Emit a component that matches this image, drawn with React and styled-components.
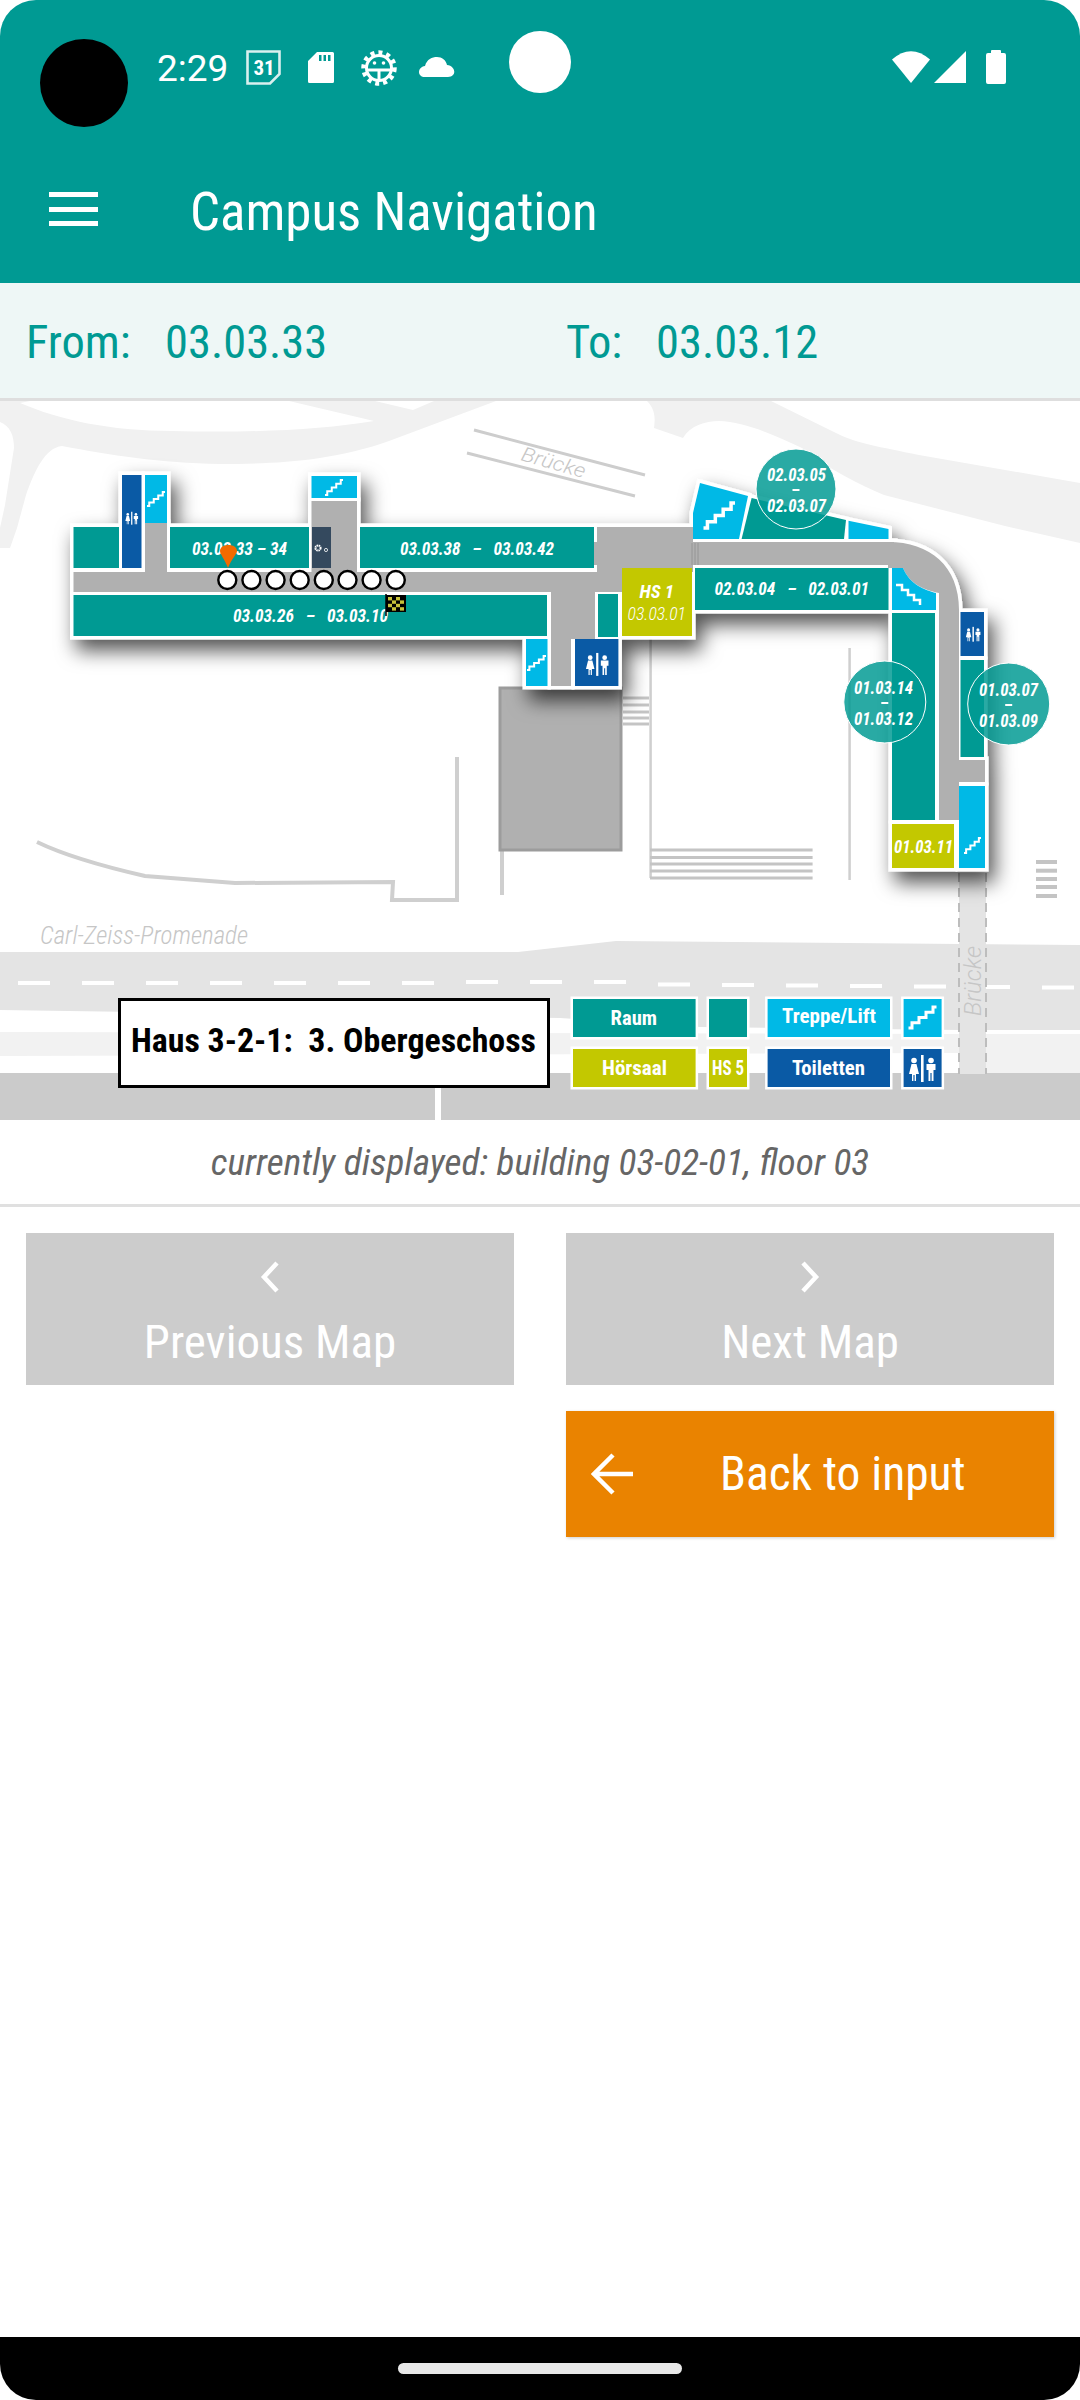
import React from "react"
import styled, { createGlobalStyle } from "styled-components"

const teal = "#009A93"
const lime = "#C3C800"
const cyan = "#00B9E6"
const navy = "#0A5AA5"
const corridor = "#B0B0B0"

const GlobalStyle = createGlobalStyle`
  html, body {
    margin: 0;
    padding: 0;
    background: #fff;
  }
  body {
    font-family: Roboto, "Liberation Sans", sans-serif;
  }
`

const Screen = styled.div`
  width: 1080px;
  height: 2400px;
  display: flex;
  flex-direction: column;
  overflow: hidden;
  position: relative;
  border-radius: 36px;
  background: #fff;
`

const Camera = styled.div`
  position: absolute;
  left: 40px;
  top: 39px;
  width: 88px;
  height: 88px;
  border-radius: 50%;
  background: #000;
`

const Dot = styled.div`
  position: absolute;
  left: 509px;
  top: 31px;
  width: 62px;
  height: 62px;
  border-radius: 50%;
  background: #fff;
`

const AppBar = styled.header`
  background: ${teal};
  color: #fff;
  height: 283px;
  flex: none;
`

const StatusBar = styled.div`
  height: 141px;
  padding: 50px 74px 0 157px;
  box-sizing: border-box;
  display: flex;
  align-items: flex-start;
`

const Clock = styled.span`
  font-size: 37px;
  line-height: 36px;
  font-weight: 400;
  width: 70px;
  margin-top: 1px;
`

const StatusIcon = styled.svg`
  display: block;
  flex: none;
  margin-left: ${({ $gap }) => $gap}px;
  margin-top: ${({ $top }) => $top || 0}px;
`

const CalendarDay = styled.text`
  font-family: Roboto, sans-serif;
  font-size: 21px;
  font-weight: 700;
  font-stretch: 75%;
  fill: #fff;
`

const RightIcons = styled.div`
  margin-left: auto;
  display: flex;
  align-items: flex-start;
`

const Toolbar = styled.div`
  height: 142px;
  display: flex;
  align-items: center;
  padding-left: 49px;
`

const Burger = styled.div`
  width: 49px;
  height: 34px;
  margin-top: -6px;
  display: flex;
  flex-direction: column;
  justify-content: space-between;
  span {
    height: 5px;
    background: #fff;
  }
`

const Title = styled.h1`
  margin: 0 0 0 92px;
  font-size: 53px;
  font-weight: 400;
  font-stretch: 75%;
  white-space: nowrap;
`

const RouteBar = styled.div`
  padding: 3px 0 0 26px;
  height: 112px;
  flex: none;
  background: #eef7f6;
  border-bottom: 3px solid #dedede;
  color: ${teal};
  display: grid;
  grid-template-columns: 540px 1fr;
  align-items: center;
  font-size: 46.5px;
  font-stretch: 75%;
`

const RouteItem = styled.div`
  display: flex;
  white-space: nowrap;
`

const RouteLabel = styled.span`
  width: ${({ $w }) => $w}px;
`

const MapArea = styled.svg`
  display: block;
  flex: none;
  width: 1080px;
  height: 719px;
`

const Caption = styled.div`
  height: 87px;
  box-sizing: border-box;
  flex: none;
  border-bottom: 3px solid #e0e0e0;
  display: flex;
  align-items: center;
  justify-content: center;
  font-size: 37.3px;
  font-style: italic;
  font-stretch: 75%;
  color: #666;
`

const Buttons = styled.div`
  display: grid;
  grid-template-columns: 488px 488px;
  column-gap: 52px;
  row-gap: 26px;
  padding: 26px 26px 0;
`

const MapButton = styled.button`
  height: 152px;
  border: 0;
  padding: 28px 0 0;
  background: #cccccc;
  color: #fff;
  font-family: inherit;
  font-size: 47px;
  font-stretch: 75%;
  display: flex;
  flex-direction: column;
  align-items: center;
  gap: 21px;
`

const BackButton = styled.button`
  grid-column: 2;
  height: 126px;
  border: 0;
  padding: 0 0 0 25px;
  background: #ea8300;
  color: #fff;
  font-family: inherit;
  font-size: 47.5px;
  font-stretch: 75%;
  display: flex;
  align-items: center;
  box-shadow: 1px 1px 3px rgba(0, 0, 0, 0.2);
`

const BackLabel = styled.span`
  margin-left: 87px;
`

const NavBar = styled.div`
  margin-top: auto;
  height: 63px;
  flex: none;
  background: #000;
  display: flex;
  align-items: center;
  justify-content: center;
`

const HomePill = styled.div`
  width: 284px;
  height: 11px;
  border-radius: 6px;
  background: #e8e8e8;
`

/* map text kinds */
const RoomText = styled.text`
  font-family: Roboto, sans-serif;
  font-size: ${({ $size }) => $size || 18}px;
  font-style: italic;
  font-stretch: 75%;
  font-weight: ${({ $light }) => ($light ? 300 : 700)};
  white-space: pre;
  fill: #fff;
`

const LegendText = styled.text`
  font-family: Roboto, sans-serif;
  font-size: 21px;
  font-weight: 700;
  font-stretch: 75%;
  fill: #fff;
`

const GroundText = styled.text`
  font-family: Roboto, sans-serif;
  font-size: ${({ $size }) => $size}px;
  font-style: italic;
  font-weight: 300;
  fill: #c6c6c6;
`

const StreetText = styled(GroundText)`
  font-stretch: 75%;
`

const BoardText = styled.text`
  font-family: Roboto, sans-serif;
  font-size: 33px;
  font-weight: 700;
  font-stretch: 75%;
  white-space: pre;
  fill: #000;
`

const parts = [
  [73.5, 572, 550, 20, corridor],
  [145, 523, 22, 49, corridor],
  [311.5, 501, 45.5, 71, corridor],
  [551, 590, 44, 49, corridor],
  [551, 639, 20, 47, corridor],
  [597, 527, 96, 45, corridor],
  [594, 542, 300, 23, corridor],
  [73.5, 527, 45.5, 41, teal],
  [122, 475, 19.5, 93, navy],
  [145, 475, 22, 48, cyan],
  [170, 527, 139, 41, teal],
  [312, 527, 19, 41, "#34495e"],
  [311.5, 476, 45.5, 22, cyan],
  [360, 527, 234, 41, teal],
  [73.5, 595, 473.5, 41, teal],
  [598, 594, 20, 43, teal],
  [526, 639, 21.5, 47, cyan],
  [575, 639, 43.4, 47, navy],
  [622, 568, 70, 68, lime],
  [695, 568, 193.5, 42, teal],
  [892, 613, 43, 207, teal],
  [892, 824, 62, 44, lime],
  [960.5, 612, 23.5, 44, navy],
  [960.5, 660, 23.5, 97, teal],
  [959, 786, 26, 82, cyan],
  [939, 760, 46, 22, corridor],
]

const corridorCurve = "M888 542 C930 542 959 566 959 610 V820 H939 V593 C925 590 910 585 903 568 H888 Z"
const stairCurve = "M892 568 H903 C910 585 925 590 936 593 V610 H892 Z"
const stairTop = "M700 483 L748 496 L739 539 H693 V513 Z"
const roomTop = "M751.6 498 L846 520 L844 539 H741.6 Z"
const stairSmall = "M848.5 520.7 L888.5 529 V539 H848.5 Z"

const legend = [
  [573, 999, 122.6, teal],
  [709, 999, 38, teal],
  [767.6, 999, 122.4, cyan],
  [903.6, 999, 38, cyan],
  [573, 1049, 122.6, lime],
  [709, 1049, 38, lime],
  [767.6, 1049, 122.4, navy],
  [903.6, 1049, 38, navy],
]

const roomLabels = [
  ["03.03.33 – 34", 192, 555, 95],
  ["03.03.38   –   03.03.42", 400, 555, 154],
  ["03.03.26   –   03.03.10", 233, 622, 155],
  ["02.03.04   –   02.03.01", 714.6, 595, 154.4],
  ["01.03.11", 894, 852.7, 59],
]

const bubbles = [
  [796, 489, 40, "02.03.05", "02.03.07", 767, 481, 490, 512],
  [884.8, 702, 41, "01.03.14", "01.03.12", 854, 694, 703, 725],
  [1008.7, 704, 41, "01.03.07", "01.03.09", 979, 696, 705, 727],
]

const trail = [227.3, 251.4, 275.6, 299.7, 323.8, 347.5, 371.6, 395.8]

const stripes = (x1, x2, ys, w) =>
  ys.map((y) => <line key={y} x1={x1} x2={x2} y1={y} y2={y} stroke="#c4c4c4" strokeWidth={w} />)

const Stairs = ({ x, y, w, h, sw = 2, flip }) => {
  const steps = 4
  const dx = w / steps
  const dy = h / steps
  let d = flip ? `M${x} ${y}` : `M${x} ${y + h}`
  for (let i = 0; i < steps; i++) {
    const px = x + dx * (i + 1)
    const py = flip ? y + dy * (i + 1) : y + h - dy * (i + 1)
    d += flip ? ` H${px} V${py}` : ` H${x + dx * i + dx * 0.5} V${py} H${px}`
  }
  return <path d={d} fill="none" stroke="#fff" strokeWidth={sw} />
}

const Toilets = ({ cx, cy, s = 1 }) => (
  <g transform={`translate(${cx} ${cy}) scale(${s})`} fill="#fff">
    <rect x={-1} y={-13} width={2.6} height={27} />
    <circle cx={-8} cy={-7.5} r={2.8} />
    <path d="M-10.5 -4 H-5.5 L-3 6 H-6 V13 H-7.4 V7 H-8.6 V13 H-10 V6 H-13 Z" />
    <circle cx={9} cy={-7.5} r={2.8} />
    <path d="M4.5 -4 H13.5 V2 H11.5 V13 H9.6 V5 H8.4 V13 H6.5 V2 H4.5 Z" />
  </g>
)

const Flag = () => (
  <g>
    <line x1={386} x2={386} y1={594} y2={616} stroke="#000" strokeWidth={1.5} />
    <rect x={386} y={595} width={20} height={17} fill="#000" />
    {[0, 1, 2, 3].map((r) =>
      [0, 1, 2, 3].map((c) =>
        (r + c) % 2 === 0 ? <rect key={`${r}${c}`} x={388 + c * 4} y={597 + r * 3.4} width={4} height={3.4} fill="#c8c23a" /> : null
      )
    )}
  </g>
)

const dashes = []
for (let x = 18; x < 1080; x += 64) {
  const y = x < 500 ? 983 - (x > 400 ? (x - 400) * 0.015 : 0) : x < 600 ? 982 : 984 + (x - 600) * 0.008
  dashes.push(<rect key={x} x={x} y={y - 2} width={32} height={4} fill="#fff" />)
}

const CampusMap = () => (
  <MapArea viewBox="0 401 1080 719">
    <defs>
      <filter id="shadow" x="-10%" y="-10%" width="125%" height="130%">
        <feDropShadow dx="6" dy="11" stdDeviation="10" floodColor="#000" floodOpacity="0.68" />
      </filter>
    </defs>

    {/* roads */}
    <path
      d="M0 401 H496 L389 441 C330 462 270 464 220 464 C160 463 110 455 62 446 C45 448 35 470 26 495 L17 528 L10 548 H0 V528 L5 505 L14 448 C14 435 10 426 0 422 Z"
      fill="#f1f1f1"
    />
    <path d="M20 403 C60 420 110 431 172 431 C250 433 320 430 374 421 L289 401 H30 Z" fill="#fff" />
    <path d="M375 401 L413 410 L434 401 Z" fill="#fff" />
    <path
      d="M647 401 C656 410 655 420 654 428 L683 438 C690 426 705 421 719 421 C745 422 775 435 802 448 C830 470 860 485 884 495 L1005 526 L1080 543 V483 L919 455 C880 447 855 443 836 433 L771 401 Z"
      fill="#f1f1f1"
    />
    <path d="M0 952 H518 L616 941 L1080 945 V1030 L960 1030 L700 1027 L560 1018 L0 1010 Z" fill="#e4e4e4" />
    <path d="M0 1032 L960 1034 L1080 1034 V1075 H960 V1053 L0 1056 Z" fill="#f2f2f2" />
    <rect x={0} y={1073} width={1080} height={47} fill="#cbcbcb" />
    <rect x={435} y={1086} width={6} height={34} fill="#fff" />
    {dashes}

    {/* bridge */}
    <rect x={959} y={873} width={27} height={201} fill="#e4e4e4" />
    <path d="M959 873 V1074 M986 873 V1074" stroke="#bdbdbd" strokeWidth={2} strokeDasharray="9 6" />
    <GroundText
      $size={24}
      transform="translate(981 1016) rotate(-90)"
      textLength={70}
      lengthAdjust="spacingAndGlyphs"
    >
      Brücke
    </GroundText>

    {/* thin lines round the building */}
    <path d="M474 430 L645 475 M467 453 L635 496" stroke="#cdcdcd" strokeWidth={3} fill="none" />
    <GroundText $size={20} transform="translate(520 460) rotate(16)" textLength={66} lengthAdjust="spacingAndGlyphs">
      Brücke
    </GroundText>
    <path d="M37 842 C70 858 110 868 145 876 L235 883 L393 882 L392 900 H457 V757" stroke="#cfcfcf" strokeWidth={4} fill="none" />
    <path d="M502 851 V895" stroke="#cfcfcf" strokeWidth={4} />
    <path d="M650.6 636 V878 M849.6 648 V880" stroke="#cfcfcf" strokeWidth={2.5} />
    {stripes(623, 649, [698, 705, 712, 718, 724], 3)}
    {stripes(650, 812.6, [850, 857.5, 864, 871, 878], 3)}
    {stripes(1036, 1057, [862, 870.7, 879, 887, 896], 4)}
    <StreetText
      $size={25}
      x={40}
      y={944}
      textLength={208}
      lengthAdjust="spacingAndGlyphs"
    >
      Carl-Zeiss-Promenade
    </StreetText>

    <rect x={500} y={688} width={121} height={162} fill={corridor} stroke="#9c9c9c" strokeWidth={3} />

    {/* white outline and shadow of the building */}
    <g filter="url(#shadow)">
      {parts.map(([x, y, w, h], i) => (
        <rect key={i} x={x - 3.5} y={y - 3.5} width={w + 7} height={h + 7} fill="#fff" />
      ))}
      <path d={corridorCurve} fill="#fff" stroke="#fff" strokeWidth={7} />
      <path d={stairTop} fill="#fff" stroke="#fff" strokeWidth={7} />
      <path d={roomTop} fill="#fff" stroke="#fff" strokeWidth={7} />
      <path d={stairSmall} fill="#fff" stroke="#fff" strokeWidth={7} />
    </g>

    {parts.map(([x, y, w, h, fill], i) => (
      <rect key={i} x={x} y={y} width={w} height={h} fill={fill} />
    ))}
    <path d={corridorCurve} fill={corridor} />
    <path d={stairCurve} fill={cyan} />
    <path d={stairTop} fill={cyan} />
    <path d={roomTop} fill={teal} />
    <path d={stairSmall} fill={cyan} />
    <path d="M692 543 V565 M695 543 V565 M698 543 V565" stroke="#9a9a9a" strokeWidth={1.2} />

    <Stairs x={147} y={492} w={18} h={14} />
    <Stairs x={325} y={480} w={18} h={15} />
    <Stairs x={527} y={656} w={19} h={14} />
    <Stairs x={964} y={838} w={17} h={15} />
    <Stairs x={703.5} y={503} w={31.5} h={25} sw={3.5} />
    <Stairs x={896} y={585} w={24} h={20} sw={2.5} flip />
    <Toilets cx={131.6} cy={518} s={0.48} />
    <Toilets cx={597} cy={664} s={0.85} />
    <Toilets cx={973} cy={634} s={0.55} />

    <g fill="none" stroke="#fff">
      <circle cx={318} cy={548} r={2.6} strokeWidth={2} strokeDasharray="1.5 0.6" />
      <circle cx={326} cy={550} r={1.6} strokeWidth={0.8} />
    </g>

    {roomLabels.map(([text, x, y, len]) => (
      <RoomText key={text} x={x} y={y} textLength={len} lengthAdjust="spacingAndGlyphs">
        {text}
      </RoomText>
    ))}
    <RoomText $size={19} x={639.5} y={598} textLength={34.5} lengthAdjust="spacingAndGlyphs">
      HS 1
    </RoomText>
    <RoomText $light x={627.6} y={620} textLength={58.4} lengthAdjust="spacingAndGlyphs">
      03.03.01
    </RoomText>

    {bubbles.map(([cx, cy, r, a, b, x, y1, y2, y3]) => (
      <g key={a}>
        <circle cx={cx} cy={cy} r={r} fill="rgba(0,154,147,0.84)" stroke="#fff" strokeWidth={1} />
        <RoomText x={x} y={y1} textLength={59} lengthAdjust="spacingAndGlyphs">
          {a}
        </RoomText>
        <rect x={cx - 3.5} y={y2 - 1} width={7} height={2} fill="#fff" />
        <RoomText x={x} y={y3} textLength={59} lengthAdjust="spacingAndGlyphs">
          {b}
        </RoomText>
      </g>
    ))}

    {trail.map((x) => (
      <circle key={x} cx={x} cy={580} r={9} fill="#fff" stroke="#000" strokeWidth={2.4} />
    ))}
    <path d="M228 568 C224 558 220 554 220 551 C220 543 237 543 237 551 C237 554 232 558 228 568 Z" fill="#f26a00" />
    <Flag />

    {/* board and legend */}
    <rect x={119.5} y={999.5} width={429} height={87} fill="#fff" stroke="#000" strokeWidth={3} />
    <BoardText x={131} y={1052} textLength={405} lengthAdjust="spacingAndGlyphs">
      Haus 3-2-1:  3. Obergeschoss
    </BoardText>
    {legend.map(([x, y, w, fill]) => (
      <rect key={`${x}${y}`} x={x} y={y} width={w} height={38} fill={fill} stroke="#fff" strokeWidth={5} paintOrder="stroke" />
    ))}
    <LegendText x={610.6} y={1025} textLength={46.4} lengthAdjust="spacingAndGlyphs">Raum</LegendText>
    <LegendText x={602} y={1075} textLength={65} lengthAdjust="spacingAndGlyphs">Hörsaal</LegendText>
    <LegendText x={712} y={1075} textLength={32} lengthAdjust="spacingAndGlyphs">HS 5</LegendText>
    <LegendText x={782} y={1023} textLength={94} lengthAdjust="spacingAndGlyphs">Treppe/Lift</LegendText>
    <LegendText x={792} y={1075} textLength={73} lengthAdjust="spacingAndGlyphs">Toiletten</LegendText>
    <Stairs x={908.5} y={1007} w={28} h={21} sw={3} />
    <Toilets cx={922} cy={1068} />
  </MapArea>
)

const CalendarIcon = () => (
  <StatusIcon $gap={19} width="35" height="35" viewBox="0 0 35 35">
    <path d="M1.5 1.5 H33.5 V24 L24 33.5 H1.5 Z" fill="none" stroke="#fff" strokeWidth="2.6" opacity="0.85" />
    <CalendarDay x="7.5" y="25">31</CalendarDay>
  </StatusIcon>
)

const SdIcon = () => (
  <StatusIcon $gap={27} $top={2} width="26" height="31" viewBox="0 0 26 31">
    <path
      d="M9 0 H24.5 Q26 0 26 1.5 V29.5 Q26 31 24.5 31 H1.5 Q0 31 0 29.5 V9 Z M11 3 V9 H13.5 V3 Z M15.5 3 V9 H18 V3 Z M20 3 V9 H22.5 V3 Z"
      fill="#fff"
      fillRule="evenodd"
    />
  </StatusIcon>
)

const DebugIcon = () => (
  <StatusIcon $gap={27} width="36" height="36" viewBox="0 0 36 36">
    <circle cx="18" cy="18" r="15.5" fill="none" stroke="#fff" strokeWidth="4.5" strokeDasharray="4 4" />
    <circle cx="18" cy="18" r="12.5" fill="none" stroke="#fff" strokeWidth="3" />
    <path d="M6 20 H30 M18 20 V31" stroke="#fff" strokeWidth="3" />
    <circle cx="13.5" cy="13" r="1.8" fill="#fff" />
    <circle cx="22.5" cy="13" r="1.8" fill="#fff" />
  </StatusIcon>
)

const CloudIcon = () => (
  <StatusIcon $gap={22} $top={7} width="36" height="20" viewBox="0 0 36 20">
    <path d="M6 20 C-2 20 -2 10 6 9 C8 2 13 0 18 0 C23 0 27 3 28 8 C37 9 38 20 29 20 Z" fill="#fff" />
  </StatusIcon>
)

const WifiIcon = () => (
  <StatusIcon $gap={0} $top={1} width="38" height="32" viewBox="0 0 38 32">
    <path d="M0 8.5 Q19 -8 38 8.5 L19 32 Z" fill="#fff" />
  </StatusIcon>
)

const SignalIcon = () => (
  <StatusIcon $gap={4} $top={1} width="32" height="32" viewBox="0 0 32 32">
    <path d="M0 32 L32 0 V32 Z" fill="#fff" />
  </StatusIcon>
)

const BatteryIcon = () => (
  <StatusIcon $gap={20} width="20" height="34" viewBox="0 0 20 34">
    <path d="M5 3 V1 Q5 0 6 0 H14 Q15 0 15 1 V3 H18 Q20 3 20 5 V32 Q20 34 18 34 H2 Q0 34 0 32 V5 Q0 3 2 3 Z" fill="#fff" />
  </StatusIcon>
)

const Chevron = ({ left }) => (
  <svg width="20" height="32" viewBox="0 0 20 32">
    <path d={left ? "M17 2 L4 16 L17 30" : "M3 2 L16 16 L3 30"} fill="none" stroke="#fff" strokeWidth="4.5" />
  </svg>
)

const App = () => (
  <Screen>
    <GlobalStyle />
    <AppBar>
      <StatusBar>
        <Clock>2:29</Clock>
        <CalendarIcon />
        <SdIcon />
        <DebugIcon />
        <CloudIcon />
        <RightIcons>
          <WifiIcon />
          <SignalIcon />
          <BatteryIcon />
        </RightIcons>
      </StatusBar>
      <Toolbar>
        <Burger>
          <span />
          <span />
          <span />
        </Burger>
        <Title>Campus Navigation</Title>
      </Toolbar>
    </AppBar>
    <RouteBar>
      <RouteItem>
        <RouteLabel $w={139}>From:</RouteLabel>
        <span>03.03.33</span>
      </RouteItem>
      <RouteItem>
        <RouteLabel $w={90}>To:</RouteLabel>
        <span>03.03.12</span>
      </RouteItem>
    </RouteBar>
    <CampusMap />
    <Caption>currently displayed: building 03-02-01, floor 03</Caption>
    <Buttons>
      <MapButton>
        <Chevron left />
        Previous Map
      </MapButton>
      <MapButton>
        <Chevron />
        Next Map
      </MapButton>
      <BackButton>
        <svg width="42" height="42" viewBox="0 0 42 42">
          <path d="M22 2 L3 21 L22 40 M3 21 H42" fill="none" stroke="#fff" strokeWidth="4.5" />
        </svg>
        <BackLabel>Back to input</BackLabel>
      </BackButton>
    </Buttons>
    <NavBar>
      <HomePill />
    </NavBar>
    <Camera />
    <Dot />
  </Screen>
)

export default App
